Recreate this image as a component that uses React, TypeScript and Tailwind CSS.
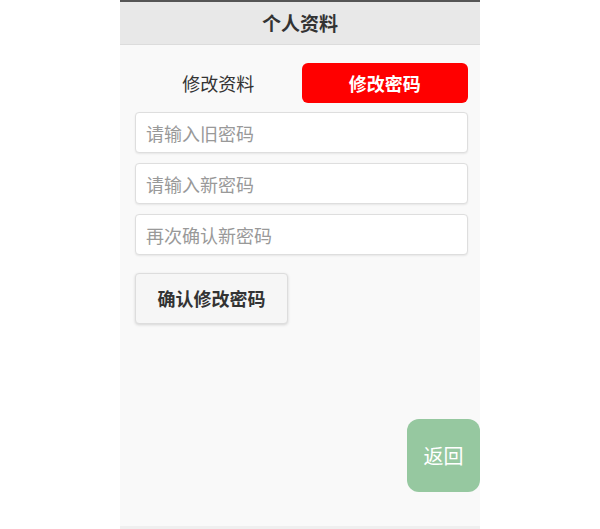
import React from "react";

function App() {
  return (
    <div className="min-h-[529px] bg-white" style={{ fontFamily: '"Noto Sans CJK SC", "Noto Sans", sans-serif' }}>
      <div className="relative mx-auto w-[360px] h-[529px] flex flex-col bg-[#f9f9f9]">
        <div className="h-[45px] bg-[#e8e8e8] border-t-2 border-[#555] border-b border-b-[#dcdcdc] flex items-center justify-center">
          <h1 className="text-[19px] font-bold text-[#333]">个人资料</h1>
        </div>

        <div className="flex-1 pl-[15px] pr-[12px] pt-[18px]">
          <div className="flex h-10">
            <button className="flex-1 text-[18px] text-[#333]">修改资料</button>
            <button className="flex-1 bg-[#ff0000] text-white text-[18px] font-bold rounded-md">
              修改密码
            </button>
          </div>

          <div className="mt-[9px] flex flex-col gap-[10px]">
            <input
              type="password"
              placeholder="请输入旧密码"
              className="h-[41px] w-full bg-white border border-[#dedede] rounded-[4px] px-[10px] text-[18px] placeholder:text-[#999] shadow-[0_1px_2px_rgba(0,0,0,0.08)] focus:outline-none"
            />
            <input
              type="password"
              placeholder="请输入新密码"
              className="h-[41px] w-full bg-white border border-[#dedede] rounded-[4px] px-[10px] text-[18px] placeholder:text-[#999] shadow-[0_1px_2px_rgba(0,0,0,0.08)] focus:outline-none"
            />
            <input
              type="password"
              placeholder="再次确认新密码"
              className="h-[41px] w-full bg-white border border-[#dedede] rounded-[4px] px-[10px] text-[18px] placeholder:text-[#999] shadow-[0_1px_2px_rgba(0,0,0,0.08)] focus:outline-none"
            />
          </div>

          <button className="mt-[18px] w-[153px] h-[51px] bg-[#f6f6f6] border border-[#dddddd] rounded-[4px] text-[18px] font-bold text-[#333] shadow-[0_1px_3px_rgba(0,0,0,0.15)]">
            确认修改密码
          </button>
        </div>

        <div className="h-[3px] bg-[#efefef]" />

        <button className="absolute right-0 top-[419px] w-[73px] h-[73px] rounded-xl bg-[#96c8a0] text-white text-[20px]">
          返回
        </button>
      </div>
    </div>
  );
}

export default App;
